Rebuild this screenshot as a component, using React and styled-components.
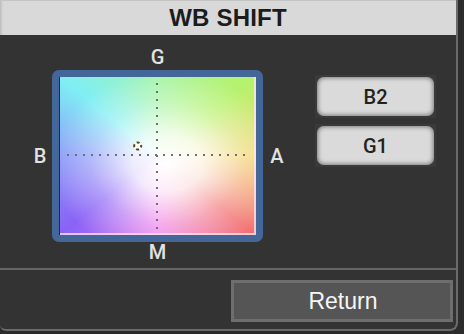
import styled, { createGlobalStyle } from "styled-components";

const Global = createGlobalStyle`
  html, body {
    margin: 0;
    padding: 0;
    background: #2c2c2c;
    font-family: "Liberation Sans", Arial, sans-serif;
  }
`;

const Window = styled.div`
  width: 458px;
  height: 331px;
  box-sizing: border-box;
  background: #333333;
  border-right: 2px solid #6a6a6a;
  border-bottom: 2px solid #6a6a6a;
  border-bottom-right-radius: 8px;
  border-bottom-left-radius: 6px;
  display: flex;
  flex-direction: column;
  overflow: hidden;
`;

const Header = styled.div`
  height: 35px;
  flex: none;
  display: flex;
  align-items: center;
  justify-content: center;
  background: #d9d9d9;
  border-top: 1px solid #c4c4c4;
  box-sizing: border-box;
  box-shadow: inset 3px 0 3px -2px rgba(0, 0, 0, 0.18);
  font-size: 24px;
  font-weight: bold;
  color: #1c1c1c;
  letter-spacing: 0.2px;
`;

const Body = styled.div`
  height: 233px;
  flex: none;
  display: flex;
  padding: 10px 0 0 28px;
  box-sizing: border-box;
`;

const PickerGrid = styled.div`
  display: grid;
  grid-template-columns: 24px 211px 28px;
  grid-template-rows: 25px 172px 20px;
  align-items: center;
  justify-items: center;
`;

const AxisLabel = styled.span`
  grid-column: ${({ $col }) => $col};
  grid-row: ${({ $row }) => $row};
  font-family: Roboto, "Liberation Sans", sans-serif;
  font-size: 20px;
  font-weight: 500;
  color: #e2e2e2;
  line-height: 1;
  margin-top: ${({ $mt }) => $mt || 0}px;
`;

const Frame = styled.div`
  grid-column: 2;
  grid-row: 2;
  width: 211px;
  height: 172px;
  box-sizing: border-box;
  padding: 7px;
  background: #44679a;
  border-radius: 7px;
`;

const Chart = styled.div`
  position: relative;
  width: 100%;
  height: 100%;
  background:
    radial-gradient(ellipse 70% 70% at 55% 55%, rgba(255, 255, 255, 1) 0%, rgba(255, 255, 255, 0.85) 25%, rgba(255, 255, 255, 0.35) 55%, rgba(255, 255, 255, 0) 85%),
    conic-gradient(from 0deg at 50% 50%, #a4f4a8 0deg, #b6f26c 51deg, #f4d672 90deg, #f27272 129deg, #f080ec 180deg, #8a62f6 231deg, #8a9af8 270deg, #80eef4 309deg, #a4f4a8 360deg);
  box-shadow: inset 1px 0 0 #1c2a44, inset -2px -2px 0 rgba(255, 230, 240, 0.75);
`;

const Overlay = styled.svg`
  position: absolute;
  inset: 0;
`;

const SideButtons = styled.div`
  display: flex;
  flex-direction: column;
  gap: 6px;
  margin: 30px 0 0 24px;
`;

const ButtonFrame = styled.div`
  padding: 2px;
  background: #3a3a3a;
`;

const ValueButton = styled.div`
  width: 117px;
  height: 39px;
  display: flex;
  align-items: center;
  justify-content: center;
  background: #dadada;
  border-radius: 7px;
  box-shadow: inset 0 0 4px 1px rgba(40, 40, 40, 0.55);
  font-family: Roboto, "Liberation Sans", sans-serif;
  font-size: 20px;
  font-weight: 500;
  color: #222222;
`;

const Footer = styled.div`
  flex: 1;
  display: flex;
  justify-content: flex-end;
  align-items: flex-start;
  border-top: 2px solid #666666;
  padding: 10px 3px 0 0;
`;

const ReturnButton = styled.button`
  width: 222px;
  height: 42px;
  box-sizing: border-box;
  background: #555555;
  border: 3px solid #6e6e6e;
  color: #f6f6f6;
  font-family: "Liberation Sans", Arial, sans-serif;
  font-size: 23px;
  padding: 0 0 0 2px;
`;

const dots = (from, to) => {
  const out = [];
  for (let v = from; v <= to; v += 8) out.push(v);
  return out;
};

const App = () => {
  return (
    <>
      <Global />
      <Window>
        <Header>WB SHIFT</Header>
        <Body>
          <PickerGrid>
            <AxisLabel $col={2} $row={1} $mt={-2}>G</AxisLabel>
            <AxisLabel $col={1} $row={2}>B</AxisLabel>
            <Frame>
              <Chart>
                <Overlay width="197" height="158">
                  {dots(6, 150).map((y) => (
                    <rect key={"v" + y} x="97" y={y} width="2" height="2" fill="#6e6e7a" />
                  ))}
                  {dots(8, 189).map((x) => (
                    <rect key={"h" + x} x={x} y="77" width="2" height="2" fill="#6e6e7a" />
                  ))}
                  <circle
                    cx="78.7"
                    cy="69"
                    r="3.5"
                    fill="#ffffff"
                    stroke="#5b4206"
                    strokeWidth="2"
                    strokeDasharray="3 2.5"
                    strokeDashoffset="1.5"
                  />
                </Overlay>
              </Chart>
            </Frame>
            <AxisLabel $col={3} $row={2}>A</AxisLabel>
            <AxisLabel $col={2} $row={3}>M</AxisLabel>
          </PickerGrid>
          <SideButtons>
            <ButtonFrame>
              <ValueButton>B2</ValueButton>
            </ButtonFrame>
            <ButtonFrame>
              <ValueButton>G1</ValueButton>
            </ButtonFrame>
          </SideButtons>
        </Body>
        <Footer>
          <ReturnButton>Return</ReturnButton>
        </Footer>
      </Window>
    </>
  );
};

export default App;
